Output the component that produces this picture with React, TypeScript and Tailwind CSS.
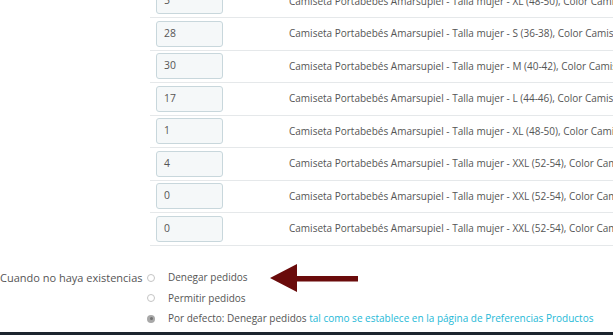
import React from 'react';

const rows = [
  { qty: '5', name: 'Camiseta Portabebés Amarsupiel - Talla mujer - XL (48-50), Color Camiseta Azul' },
  { qty: '28', name: 'Camiseta Portabebés Amarsupiel - Talla mujer - S (36-38), Color Camiseta Negra' },
  { qty: '30', name: 'Camiseta Portabebés Amarsupiel - Talla mujer - M (40-42), Color Camiseta Negra' },
  { qty: '17', name: 'Camiseta Portabebés Amarsupiel - Talla mujer - L (44-46), Color Camiseta Negra' },
  { qty: '1', name: 'Camiseta Portabebés Amarsupiel - Talla mujer - XL (48-50), Color Camiseta Negra' },
  { qty: '4', name: 'Camiseta Portabebés Amarsupiel - Talla mujer - XXL (52-54), Color Camiseta Negra' },
  { qty: '0', name: 'Camiseta Portabebés Amarsupiel - Talla mujer - XXL (52-54), Color Camiseta Azul' },
  { qty: '0', name: 'Camiseta Portabebés Amarsupiel - Talla mujer - XXL (52-54), Color Camiseta Roja' },
];

// Radio pequeño estilo PrestaShop
function Radio({ checked }: { checked?: boolean }) {
  if (checked) {
    return (
      <span className="flex h-[8px] w-[8px] shrink-0 items-center justify-center rounded-full bg-[#a8a8a8]">
        <span className="h-[3px] w-[3px] rounded-full bg-[#707070]" />
      </span>
    );
  }
  return <span className="h-[8px] w-[8px] shrink-0 rounded-full border border-[#c4c4c4] bg-white" />;
}

export default function App() {
  return (
    <div
      className="relative h-[335px] w-[613px] overflow-hidden bg-white text-[10px] text-[#555]"
      style={{ fontFamily: '"Open Sans", sans-serif' }}
    >
      {/* Tabla de combinaciones */}
      <div className="mt-[-14.5px] pl-[150px]">
        {rows.map((r, i) => (
          <div key={i} className="flex h-[32.5px] items-center border-b border-[#e5e8ea]">
            <div className="w-[139px] shrink-0 pl-[6px]">
              <div className="flex h-[26px] w-[67px] items-center rounded-[3px] border border-[#c8d7dc] bg-[#f5f8f9] pl-[7px] text-[10.4px] text-[#555]">
                {r.qty}
              </div>
            </div>
            <div className="whitespace-nowrap">{r.name}</div>
          </div>
        ))}
      </div>

      {/* Cuando no haya existencias */}
      <div className="mt-[22px] flex">
        <div className="w-[141px] shrink-0 whitespace-nowrap pt-[3px] text-right text-[11px] leading-[14px]">
          Cuando no haya existencias
        </div>
        <div className="flex flex-col pl-[6px]">
          <div className="flex h-[20.5px] items-center gap-[13px]">
            <Radio />
            <span>Denegar pedidos</span>
          </div>
          <div className="flex h-[20.5px] items-center gap-[13px]">
            <Radio />
            <span>Permitir pedidos</span>
          </div>
          <div className="flex h-[20.5px] items-center gap-[13px]">
            <Radio checked />
            <span className="whitespace-nowrap">
              Por defecto: Denegar pedidos{' '}
              <span className="text-[10px] text-[#25b9d7]">tal como se establece en la página de Preferencias Productos</span>
            </span>
          </div>
        </div>
      </div>

      <div className="mt-[3px] h-[2.5px] w-full bg-[#1d252e]" />

      {/* Flecha */}
      <svg className="absolute left-[269px] top-[262px]" width="92" height="32" viewBox="0 0 92 32">
        <polygon points="1,16 28,2 28,14 89,14 89,19.5 28,19.5 28,30" fill="#6a0b0b" />
      </svg>
    </div>
  );
}
